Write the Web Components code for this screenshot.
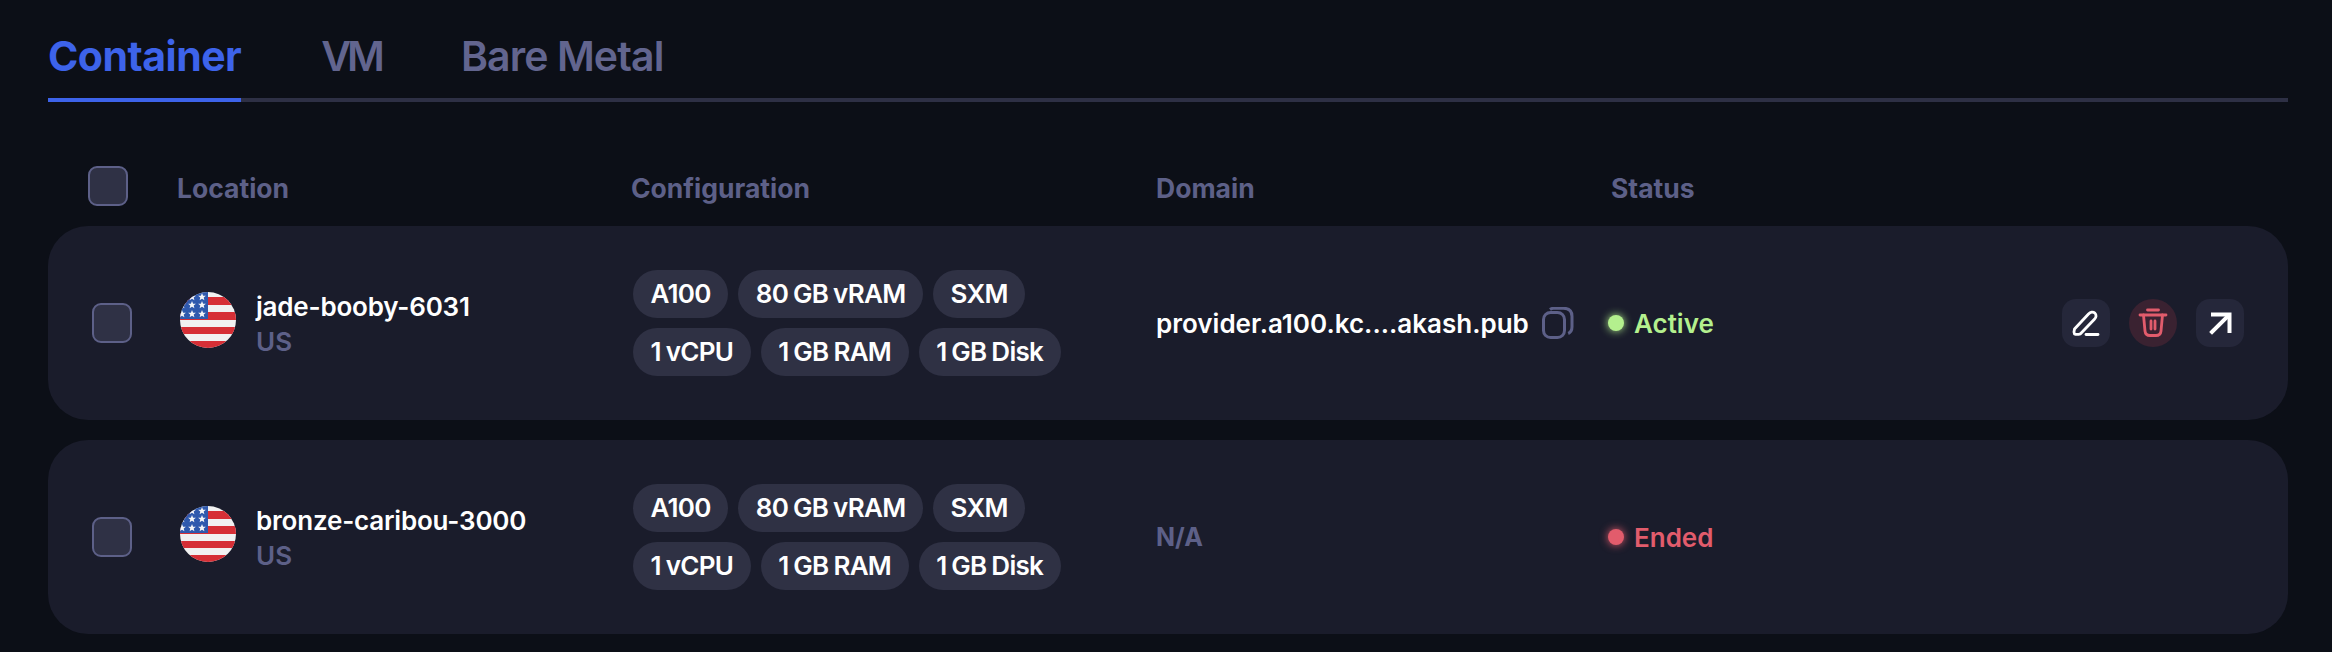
<!DOCTYPE html>
<html lang="en">
<head>
<meta charset="utf-8">
<title>Deployments</title>
<style>
    html, body { margin: 0; background: #0c0f17; }
    body { font-family: Inter, "Noto Sans", sans-serif; color: #fff; }
    #page { display: block; padding: 34px 44px 0 48px; }
</style>
</head>
<body>
<div id="page">
    <k-tabs>
        <k-tab active>Container</k-tab>
        <k-tab style="letter-spacing: -4px">VM</k-tab>
        <k-tab>Bare Metal</k-tab>
    </k-tabs>
    <k-head></k-head>
    <k-row name="jade-booby-6031" domain="provider.a100.kc....akash.pub" status="Active"></k-row>
    <k-row name="bronze-caribou-3000" status="Ended"></k-row>
</div>

<script>
const columns = 'grid-template-columns: 88px 453px 523px 451px 1fr;';

class KTabs extends HTMLElement {
    constructor() {
        super();
        this.attachShadow({ mode: 'open' }).innerHTML = `
            <style>
                :host { display: flex; gap: 80px; border-bottom: 4px solid #2e3045; }
            </style>
            <slot></slot>
        `;
    }
}

class KTab extends HTMLElement {
    constructor() {
        super();
        this.attachShadow({ mode: 'open' }).innerHTML = `
            <style>
                :host {
                    display: block;
                    margin-bottom: -4px;
                    padding-bottom: 20px;
                    border-bottom: 4px solid transparent;
                    font-size: 41px;
                    line-height: 44px;
                    font-weight: 600;
                    letter-spacing: -0.9px;
                    color: #62658f;
                }
                :host([active]) {
                    font-weight: 700;
                    letter-spacing: -0.5px;
                    color: #3d63ea;
                    border-bottom-color: #3d63ea;
                }
            </style>
            <slot></slot>
        `;
    }
}

class KCheck extends HTMLElement {
    constructor() {
        super();
        this.attachShadow({ mode: 'open' }).innerHTML = `
            <style>
                :host {
                    display: block;
                    box-sizing: border-box;
                    width: 40px;
                    height: 40px;
                    border: 2px solid #5d6088;
                    border-radius: 9px;
                    background: #2f3145;
                }
            </style>
        `;
    }
}

class KHead extends HTMLElement {
    constructor() {
        super();
        this.attachShadow({ mode: 'open' }).innerHTML = `
            <style>
                :host {
                    display: grid;
                    ${columns}
                    align-items: center;
                    margin: 64px 0 18px;
                    padding-left: 40px;
                    font-size: 26.5px;
                    line-height: 40px;
                    font-weight: 700;
                    color: #5d6088;
                }
                k-check { align-self: start; }
                span { margin-top: 2px; }
                .location { margin-left: 1px; }
                .config { margin-left: 2px; }
                .domain { margin-left: 4px; }
                .status { margin-left: 8px; }
            </style>
            <k-check></k-check>
            <span class="location">Location</span>
            <span class="config">Configuration</span>
            <span class="domain">Domain</span>
            <span class="status">Status</span>
        `;
    }
}

class KChip extends HTMLElement {
    constructor() {
        super();
        this.attachShadow({ mode: 'open' }).innerHTML = `
            <style>
                :host {
                    display: block;
                    padding: 0 17.5px;
                    border-radius: 24px;
                    background: #2f3144;
                    font-size: 26px;
                    line-height: 48px;
                    font-weight: 600;
                    letter-spacing: -0.7px;
                    word-spacing: -1px;
                    color: #fff;
                }
            </style>
            <slot></slot>
        `;
    }
}

class KFlag extends HTMLElement {
    constructor() {
        super();
        const star = (x, y) => `<use href="#star" x="${x}" y="${y}"/>`;
        this.attachShadow({ mode: 'open' }).innerHTML = `
            <style>
                :host { display: block; width: 56px; height: 56px; margin: -6px 0 0; }
                svg { display: block; }
            </style>
            <svg width="56" height="56" viewBox="0 0 56 56">
                <defs>
                    <clipPath id="round"><circle cx="28" cy="28" r="28"/></clipPath>
                    <polygon id="star" fill="#f4f5f7" points="0,-4 1.1,-1.3 3.9,-1.2 1.7,0.6 2.4,3.3 0,1.8 -2.4,3.3 -1.7,0.6 -3.9,-1.2 -1.1,-1.3"/>
                </defs>
                <g clip-path="url(#round)">
                    <rect width="56" height="56" fill="#f1f1f1"/>
                    <rect y="5" width="56" height="8" fill="#d62f36"/>
                    <rect y="20" width="56" height="8" fill="#d62f36"/>
                    <rect y="35" width="56" height="7" fill="#d62f36"/>
                    <rect y="49" width="56" height="7" fill="#d62f36"/>
                    <rect width="28" height="27" fill="#2f59ad"/>
                    ${star(22, 5)}${star(12, 5)}
                    ${star(22, 13)}${star(12, 13)}${star(2, 13)}
                    ${star(22, 22)}${star(12, 22)}${star(2, 22)}
                </g>
            </svg>
        `;
    }
}

class KStatus extends HTMLElement {
    constructor() {
        super();
        this.attachShadow({ mode: 'open' }).innerHTML = `
            <style>
                :host {
                    --c: #b4f08e;
                    display: flex;
                    align-items: center;
                    gap: 10px;
                    font-size: 26px;
                    font-weight: 600;
                    color: var(--c);
                }
                :host([tone="ended"]) { --c: #e25c6c; }
                i {
                    width: 16px;
                    height: 16px;
                    margin-left: 1px;
                    border-radius: 50%;
                    background: var(--c);
                    box-shadow: 0 0 8px var(--c);
                }
            </style>
            <i></i><slot></slot>
        `;
    }
}

class KAction extends HTMLElement {
    constructor() {
        super();
        this.attachShadow({ mode: 'open' }).innerHTML = `
            <style>
                :host {
                    display: flex;
                    align-items: center;
                    justify-content: center;
                    width: 48px;
                    height: 48px;
                    border-radius: 14px;
                    background: #25273a;
                }
                :host([danger]) { border-radius: 50%; background: #3a2231; }
            </style>
            <slot></slot>
        `;
    }
}

class KRow extends HTMLElement {
    constructor() {
        super();
        const name = this.getAttribute('name');
        const domain = this.getAttribute('domain');
        const status = this.getAttribute('status');
        const domainCell = domain
            ? `<span class="domain">${domain}</span>
               <svg class="copy" width="32" height="32" viewBox="0 0 32 32" fill="none" stroke="#5d6088" stroke-width="3">
                   <rect x="1.500" y="5.500" width="21" height="25" rx="7"/>
                   <path d="M8 2.500c1-.8 2-1.200 3.500-1.200h10c5 0 8.500 2.500 8.500 8v10.500c0 3.500-1.500 5.700-3.800 6.700"/>
               </svg>`
            : `<span class="none">N/A</span>`;
        const actions = domain ? `
            <k-action>
                <svg width="28" height="28" viewBox="0 0 28 28" fill="none" stroke="#fff" stroke-width="2.800" stroke-linecap="round" stroke-linejoin="round">
                    <path d="M2.500 20 16.500 5c2-2.200 4.500-2.600 6.300-.9 1.800 1.700 1.600 4.100-.4 6.200L8.500 24.800c-2 .6-4.500.8-6 .2-.6-1.500-.5-3.500 0-5z"/>
                    <path d="M14 25.500h12"/>
                </svg>
            </k-action>
            <k-action danger>
                <svg width="30" height="30" viewBox="0 0 30 30" fill="none" stroke="#e25c6c" stroke-width="2.800" stroke-linecap="round" stroke-linejoin="round">
                    <path d="M9.500 2h11"/>
                    <path d="M2 7h26"/>
                    <path d="M5.500 7l1.500 16c.3 3 2 4.500 5 4.500h6c3 0 4.700-1.500 5-4.500l1.500-16"/>
                    <path d="M13 13v8M17 13v8"/>
                </svg>
            </k-action>
            <k-action>
                <svg width="24" height="24" viewBox="0 0 24 24" fill="none" stroke="#fff" stroke-width="4" stroke-linecap="square">
                    <path d="M4 21 20 5"/>
                    <path d="M5 3.500h16.500V20"/>
                </svg>
            </k-action>` : '';

        this.attachShadow({ mode: 'open' }).innerHTML = `
            <style>
                :host {
                    display: grid;
                    ${columns}
                    align-items: center;
                    height: 194px;
                    margin-bottom: 20px;
                    padding: 0 44px;
                    border-radius: 40px;
                    background: #1a1c2b;
                }
                .location { display: flex; align-items: center; gap: 20px; }
                .name { font-size: 26px; line-height: 36px; font-weight: 600; letter-spacing: -0.2px; color: #fff; }
                .region { font-size: 26px; line-height: 32px; padding-top: 1px; font-weight: 600; color: #5d6088; }
                .chips { display: flex; flex-wrap: wrap; gap: 10px; width: 440px; }
                .cell { display: flex; align-items: center; gap: 13px; }
                .domain { font-size: 26px; font-weight: 600; color: #fff; white-space: nowrap; }
                .none { font-size: 25px; font-weight: 700; color: #5d6088; }
                .copy { margin-top: -1px; }
                .end { display: flex; align-items: center; justify-content: space-between; }
                .actions { display: flex; gap: 19px; }
            </style>
            <k-check></k-check>
            <div class="location">
                <k-flag></k-flag>
                <div>
                    <div class="name">${name}</div>
                    <div class="region">US</div>
                </div>
            </div>
            <div class="chips">
                <k-chip>A100</k-chip>
                <k-chip>80 GB vRAM</k-chip>
                <k-chip>SXM</k-chip>
                <k-chip>1 vCPU</k-chip>
                <k-chip>1 GB RAM</k-chip>
                <k-chip>1 GB Disk</k-chip>
            </div>
            <div class="cell">${domainCell}</div>
            <div class="end">
                <k-status tone="${status.toLowerCase()}">${status}</k-status>
                <div class="actions">${actions}</div>
            </div>
        `;
    }
}

customElements.define('k-tabs', KTabs);
customElements.define('k-tab', KTab);
customElements.define('k-check', KCheck);
customElements.define('k-head', KHead);
customElements.define('k-chip', KChip);
customElements.define('k-flag', KFlag);
customElements.define('k-status', KStatus);
customElements.define('k-action', KAction);
customElements.define('k-row', KRow);
</script>
</body>
</html>
